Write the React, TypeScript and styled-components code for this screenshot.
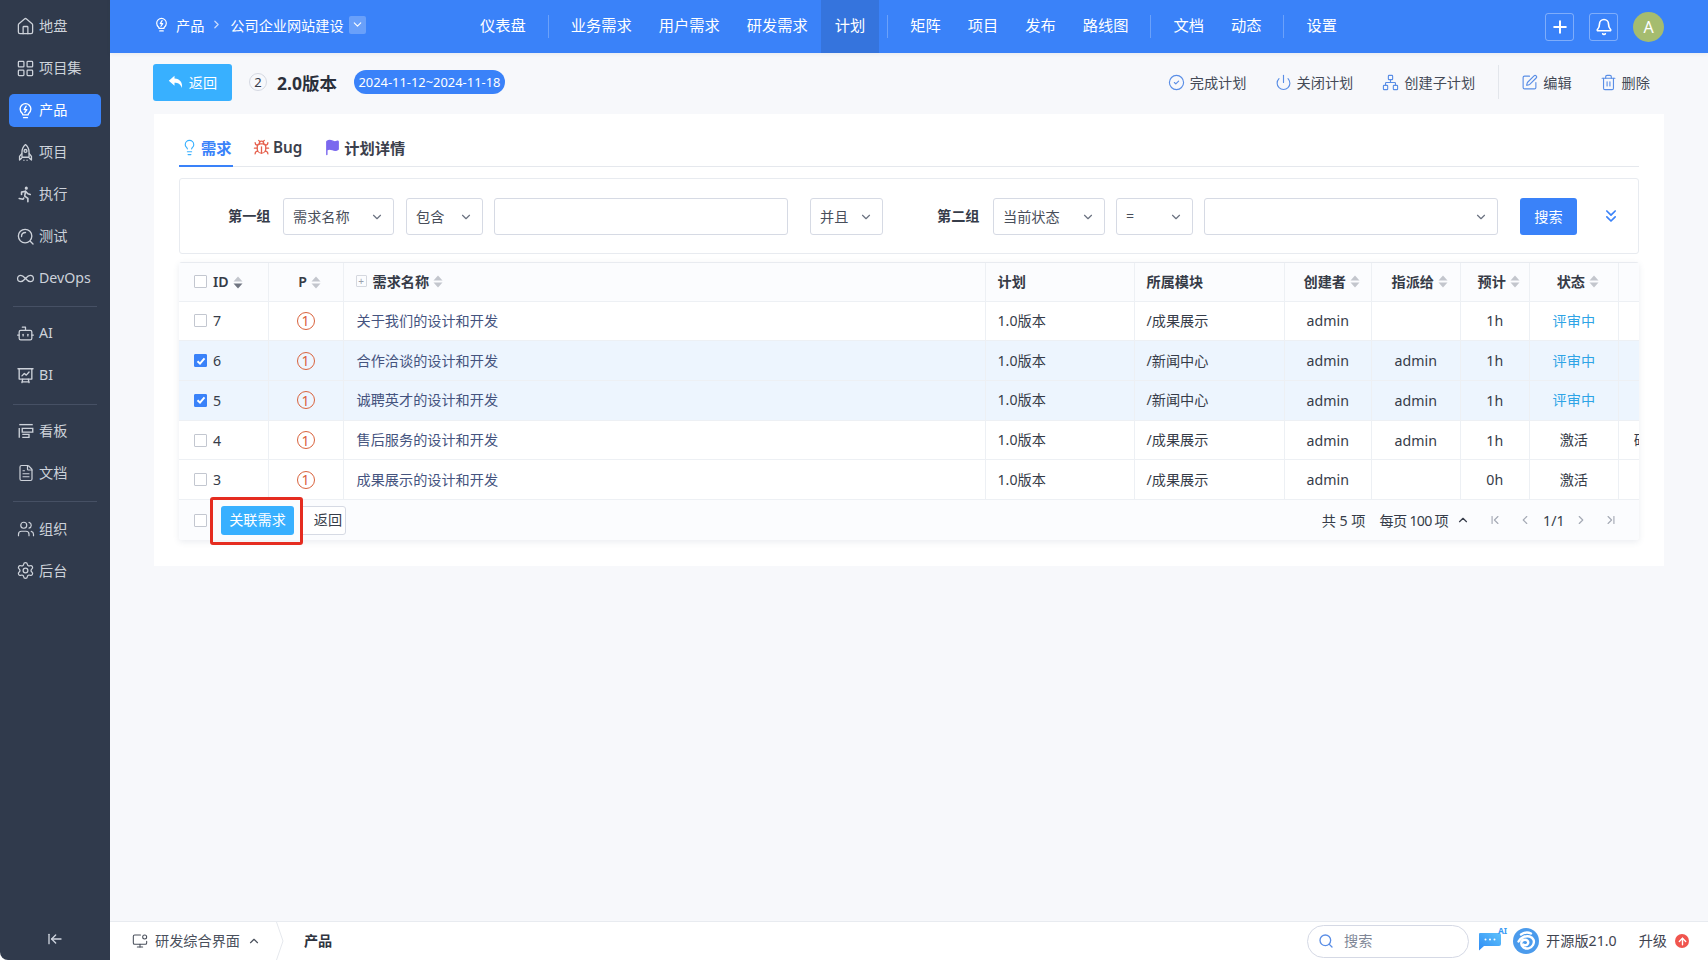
import React from "react";
import styled, { createGlobalStyle } from "styled-components";
import {
  ArrowLeftToLine,
  ArrowUp,
  Bell,
  Bot,
  Bug,
  ChevronDown,
  ChevronFirst,
  ChevronLast,
  ChevronLeft,
  ChevronRight,
  ChevronUp,
  ChevronsDown,
  CircleCheck,
  FileText,
  Flag,
  House,
  Infinity as InfinityIcon,
  LayoutGrid,
  Lightbulb,
  MonitorDot,
  Network,
  Plus,
  Power,
  Search,
  Settings,
  SquarePen,
  Trash2,
  Users,
} from "lucide-react";
import { TbRun } from "react-icons/tb";

const BLUE = "#3a82f9";
const TEXT = "#363c49";
const LINE = "#edf0f4";
const COLUMNS = "89.5px 75px 642px 149px 150px 87.5px 88.5px 69.5px 88.7px 60px";

const GlobalStyle = createGlobalStyle`
  html, body {
    margin: 0;
    padding: 0;
    background: #fff;
    overflow: hidden;
  }
  body {
    font-family: "Noto Sans", "Noto Sans CJK SC", sans-serif;
    font-size: 14.16px;
    color: ${TEXT};
  }
  * { box-sizing: border-box; }
`;

const Shell = styled.div`
  width: 1708px;
  height: 960px;
  display: flex;
  overflow: hidden;
  border-radius: 0 0 8px 8px;
`;

const Sidebar = styled.aside`
  width: 110px;
  flex: none;
  background: #303a4c;
  position: relative;
  padding-top: 9.5px;
`;

const SideItem = styled.div<{ $active?: boolean }>`
  height: 33px;
  margin: 0 9px 9px;
  padding: 0 0 2px 7px;
  display: flex;
  align-items: center;
  gap: 4px;
  border-radius: 5px;
  font-size: 14.16px;
  color: ${(p) => (p.$active ? "#fff" : "#cdd2da")};
  background: ${(p) => (p.$active ? BLUE : "transparent")};
`;

const SideIcon = styled.span`
  width: 19px;
  margin-top: 2px;
  flex: none;
  display: flex;
  justify-content: center;
`;

const SideDivider = styled.div`
  height: 1px;
  margin: 11.5px 13px 10px;
  background: #465064;
`;

const Collapse = styled.div`
  position: absolute;
  left: 47px;
  top: 931px;
  color: #cfd5df;
  display: flex;
`;

const Main = styled.div`
  flex: 1;
  min-width: 0;
  display: flex;
  flex-direction: column;
`;

const Topbar = styled.header`
  height: 53px;
  flex: none;
  display: flex;
  align-items: center;
  background: ${BLUE};
  color: #fff;
  position: relative;
  z-index: 2;
  box-shadow: 0 1px 4px rgba(40, 60, 90, 0.08);
`;

const Crumbs = styled.div`
  width: 356.4px;
  flex: none;
  padding: 0 0 4px 43px;
  display: flex;
  align-items: center;
  font-size: 14.16px;
`;

const CrumbText = styled.span`
  margin-left: 6px;
  white-space: nowrap;
`;

const CrumbArrow = styled.span`
  display: flex;
  margin: 0 1px 0 6px;
  color: #c6dafd;
`;

const CrumbToggle = styled.span`
  width: 17px;
  height: 18px;
  margin-left: 5px;
  border-radius: 2px;
  display: flex;
  align-items: center;
  justify-content: center;
  background: rgba(255, 255, 255, 0.24);
`;

const NavItem = styled.div<{ $active?: boolean }>`
  height: 53px;
  padding: 0 13.5px 6px;
  display: flex;
  align-items: center;
  font-size: 15.25px;
  white-space: nowrap;
  background: ${(p) => (p.$active ? "#3574dd" : "transparent")};
`;

const NavDivider = styled.div`
  width: 1px;
  height: 23px;
  margin: 0 8.5px;
  background: rgba(255, 255, 255, 0.25);
`;

const TopTools = styled.div`
  margin-left: auto;
  padding-right: 44px;
  display: flex;
  align-items: center;
`;

const ToolButton = styled.div`
  width: 29px;
  height: 28px;
  margin-right: 15px;
  border: 1px solid rgba(255, 255, 255, 0.35);
  border-radius: 3px;
  display: flex;
  align-items: center;
  justify-content: center;
`;

const Avatar = styled.div`
  width: 31px;
  height: 30px;
  border-radius: 50%;
  background: #a5bc6f;
  display: flex;
  align-items: center;
  justify-content: center;
  font-size: 16px;
`;

const Content = styled.main`
  flex: 1;
  min-height: 0;
  background: #f7f8fb;
`;

const PageHead = styled.div`
  height: 61px;
  padding: 0 0 3px 43px;
  display: flex;
  align-items: center;
`;

const BackButton = styled.div`
  width: 79px;
  height: 37px;
  border-radius: 3px;
  background: #38b0ff;
  color: #fff;
  display: flex;
  align-items: center;
  justify-content: center;
  gap: 5px;
`;

const PlanId = styled.span`
  width: 18px;
  height: 18px;
  margin-left: 17px;
  border: 1px solid #d5d9e2;
  border-radius: 50%;
  display: flex;
  align-items: center;
  justify-content: center;
  font-size: 13px;
`;

const PlanTitle = styled.h1`
  margin: 0 0 0 10px;
  font-size: 17.5px;
  font-weight: 700;
  color: #2b303b;
  white-space: nowrap;
`;

const DatePill = styled.span`
  width: 151px;
  height: 24px;
  margin-left: 17px;
  border-radius: 12px;
  background: ${BLUE};
  color: #fff;
  font-size: 12.9px;
  display: flex;
  align-items: center;
  justify-content: center;
  white-space: nowrap;
`;

const HeadActions = styled.div`
  margin-left: auto;
  padding-right: 58px;
  display: flex;
  align-items: center;
`;

const Action = styled.div<{ $gap: number }>`
  margin-left: ${(p) => p.$gap}px;
  display: flex;
  align-items: center;
  gap: 5px;
  font-size: 14.2px;
  white-space: nowrap;
  color: #444a56;
  svg { color: #5a8ee6; }
`;

const ActionDivider = styled.div`
  width: 1px;
  height: 34px;
  margin: 0 22px 0 23px;
  background: #e3e6eb;
`;

const Panel = styled.section`
  height: 452px;
  margin: 0 44.5px 0 44px;
  padding: 0 25px;
  background: #fff;
`;

const Tabs = styled.div`
  height: 53px;
  display: flex;
  align-items: center;
  padding-top: 14px;
  border-bottom: 1px solid #e5e8ed;
`;

const Tab = styled.div<{ $active?: boolean; $gap?: number }>`
  height: 39px;
  margin-left: ${(p) => p.$gap ?? 0}px;
  display: flex;
  align-items: center;
  gap: 3px;
  padding: 0 1px 0 2px;
  font-size: 15.25px;
  font-weight: 600;
  color: ${(p) => (p.$active ? BLUE : "#3b404c")};
  box-shadow: ${(p) => (p.$active ? `inset 0 -2px 0 ${BLUE}` : "none")};
`;

const SearchBox = styled.div`
  height: 76px;
  margin-top: 11px;
  border: 1px solid #e8ebf0;
  border-radius: 3px;
  display: flex;
  align-items: center;
  position: relative;
`;

const GroupLabel = styled.span<{ $left: number }>`
  position: absolute;
  left: ${(p) => p.$left}px;
  margin-top: -2px;
  font-weight: 600;
  white-space: nowrap;
`;

const Field = styled.div<{ $left: number; $width: number }>`
  position: absolute;
  left: ${(p) => p.$left}px;
  top: 19px;
  width: ${(p) => p.$width}px;
  height: 37px;
  padding: 0 9px 2px;
  border: 1px solid #d6dae4;
  border-radius: 3px;
  display: flex;
  align-items: center;
  justify-content: space-between;
  background: #fff;
  color: #484e5a;
  svg { color: #6b7280; flex: none; margin-top: 2px; }
`;

const SearchButton = styled.div`
  position: absolute;
  left: 1340px;
  top: 19px;
  width: 57px;
  height: 37px;
  padding-bottom: 2px;
  border-radius: 3px;
  background: ${BLUE};
  color: #fff;
  display: flex;
  align-items: center;
  justify-content: center;
`;

const MoreToggle = styled.div`
  position: absolute;
  left: 1421px;
  top: 27px;
  color: ${BLUE};
  display: flex;
`;

const Table = styled.div`
  margin-top: 8px;
  border-top: 1px solid #e8ebf0;
  border-radius: 3px;
  box-shadow: 0 2px 6px rgba(60, 80, 120, 0.1);
`;

const TableRow = styled.div<{ $checked?: boolean; $head?: boolean }>`
  display: grid;
  grid-template-columns: ${COLUMNS};
  height: ${(p) => (p.$head ? 38.6 : 39.7)}px;
  overflow: hidden;
  border-bottom: 1px solid ${LINE};
  background: ${(p) => (p.$head ? "#fbfcfe" : p.$checked ? "#edf5fe" : "#fff")};
`;

// Latin-only cells sit on the row centre, CJK glyphs need a nudge up
const Cell = styled.div<{ $center?: boolean; $pad?: number; $latin?: boolean }>`
  display: flex;
  align-items: center;
  gap: 6px;
  padding-left: ${(p) => p.$pad ?? 0}px;
  padding-bottom: ${(p) => (p.$latin ? 0 : 2)}px;
  justify-content: ${(p) => (p.$center ? "center" : "flex-start")};
  border-right: 1px solid ${LINE};
  white-space: nowrap;
  min-width: 0;
  &:last-child { border-right: 0; }
`;

const HeadCell = styled(Cell)`
  font-weight: 600;
  gap: 4px;
  padding-left: ${(p) => (p.$center ? 8 : p.$pad ?? 0)}px;
  color: #363b47;
`;

const IdLabel = styled.span`
  margin-left: 2px;
`;

const NameLink = styled.span`
  color: #45547f;
`;

const StatusText = styled.span<{ $review?: boolean }>`
  color: ${(p) => (p.$review ? "#2ea4e6" : TEXT)};
`;

const Clipped = styled.span`
  margin-left: 15px;
`;

const Box = styled.span<{ $checked?: boolean }>`
  width: 13px;
  height: 13px;
  flex: none;
  border: 1px solid ${(p) => (p.$checked ? BLUE : "#c3c7d0")};
  border-radius: 1px;
  background: ${(p) => (p.$checked ? BLUE : "#fff")};
  display: flex;
  align-items: center;
  justify-content: center;
`;

const Priority = styled.span`
  width: 18px;
  height: 18px;
  border: 1px solid #d9623c;
  border-radius: 50%;
  display: flex;
  align-items: center;
  justify-content: center;
  color: #d9623c;
  font-size: 14px;
`;

const ExpandBox = styled.span`
  width: 11px;
  height: 12px;
  margin-right: 2px;
  border: 1px solid #d5d8df;
  border-radius: 1px;
  display: flex;
  align-items: center;
  justify-content: center;
  color: #9aa0ac;
  font-size: 10px;
  font-weight: 400;
  line-height: 1;
`;

const Footer = styled.div`
  height: 40px;
  padding-left: 15px;
  display: flex;
  align-items: center;
  background: #fbfcfe;
  border-radius: 0 0 3px 3px;
`;

const LinkButton = styled.div`
  width: 73px;
  height: 29px;
  margin-left: 14px;
  padding-bottom: 2px;
  border-radius: 3px;
  background: #38b0ff;
  color: #fff;
  display: flex;
  align-items: center;
  justify-content: center;
  position: relative;
  z-index: 1;
  &::after {
    content: "";
    position: absolute;
    inset: -9px -9px -10px -11px;
    border: 3px solid #e52c20;
    border-radius: 3px;
  }
`;

const ReturnButton = styled.div`
  width: 46px;
  height: 29px;
  margin-left: 6px;
  padding: 0 0 2px 10px;
  border: 1px solid #d6dae4;
  border-radius: 3px;
  background: #fff;
  display: flex;
  align-items: center;
  justify-content: center;
`;

const Pager = styled.div`
  margin-left: auto;
  padding-right: 21px;
  display: flex;
  align-items: center;
  white-space: nowrap;
`;

const PagerText = styled.span<{ $gap: number; $tight?: boolean }>`
  margin-left: ${(p) => p.$gap}px;
  letter-spacing: ${(p) => (p.$tight ? "-0.7px" : "0")};
  display: flex;
  align-items: center;
`;

const PagerIcon = styled.span<{ $gap: number }>`
  margin-left: ${(p) => p.$gap}px;
  color: #a5aab5;
  display: flex;
`;

const BottomBar = styled.footer`
  height: 39px;
  flex: none;
  display: flex;
  align-items: center;
  background: #fff;
  border-top: 1px solid #e8ebf0;
  padding: 0 19px 0 22px;
`;

const AppSwitch = styled.div`
  padding-bottom: 2px;
  display: flex;
  align-items: center;
  gap: 7px;
  color: #4a505c;
  svg { margin-top: 2px; }
`;

const CrumbSplit = styled.svg`
  margin-left: 15px;
  flex: none;
`;

const CurrentApp = styled.span`
  margin: 0 0 2px 20px;
  font-weight: 700;
  color: #2f3440;
`;

const BottomRight = styled.div`
  margin-left: auto;
  display: flex;
  align-items: center;
`;

const GlobalSearch = styled.div`
  width: 162px;
  height: 33px;
  padding: 0 0 2px 10px;
  border: 1px solid #d5d9e5;
  border-radius: 17px;
  display: flex;
  align-items: center;
  gap: 10px;
  color: #808797;
  svg { color: #5a8ee6; margin-top: 2px; }
`;

const AiBadge = styled.div`
  width: 30px;
  height: 24px;
  margin: 0 6px 0 8px;
  position: relative;
`;

const AiLabel = styled.span`
  position: absolute;
  right: 0;
  top: -2px;
  color: #3a9cf5;
  font-size: 8.5px;
  font-weight: 700;
  line-height: 1;
`;

const EditionText = styled.span`
  margin: 0 0 2px 7px;
  color: #3f4450;
  white-space: nowrap;
`;

const UpgradeText = styled.span`
  margin: 0 0 2px 22px;
  color: #3f4450;
`;

const UpgradeDot = styled.span`
  width: 14px;
  height: 14px;
  margin-left: 8px;
  border-radius: 50%;
  background: #f0554e;
  color: #fff;
  display: flex;
  align-items: center;
  justify-content: center;
`;

const BulbBolt = ({ size = 19 }: { size?: number }) => (
  <svg width={size} height={size} viewBox="0 0 24 24" fill="none" stroke="currentColor" strokeWidth="1.7" strokeLinecap="round" strokeLinejoin="round">
    <path d="M8.5 16.5C6.6 15 5.2 13 5.2 10.2a6.8 6.8 0 0 1 13.6 0c0 2.8-1.4 4.8-3.3 6.3v1H8.5z" />
    <path d="M9.5 21h5" />
    <path d="M12.8 6.5 10.3 10.8h3.4l-2.5 3.7" />
  </svg>
);

const RocketGlyph = () => (
  <svg width="19" height="19" viewBox="0 0 24 24" fill="none" stroke="currentColor" strokeWidth="1.7" strokeLinejoin="round">
    <path d="M12 2c3 2.5 4.5 6 4.5 10v6h-9v-6C7.5 8 9 4.5 12 2z" />
    <circle cx="12" cy="10" r="1.8" />
    <path d="M7.5 13 4.5 17v4.5l3-2.5" />
    <path d="M16.5 13l3 4v4.5l-3-2.5" />
    <path d="M10 21v1.5M14 21v1.5" />
  </svg>
);

const ProbeGlyph = () => (
  <svg width="19" height="19" viewBox="0 0 24 24" fill="none" stroke="currentColor" strokeWidth="1.7" strokeLinecap="round">
    <circle cx="11.5" cy="11.5" r="8.5" />
    <path d="M18 18l3.5 3.5" />
    <path d="M7 12c0-3 2-5 5-5" />
  </svg>
);

const BoardGlyph = () => (
  <svg width="19" height="19" viewBox="0 0 24 24" fill="none" stroke="currentColor" strokeWidth="1.7" strokeLinecap="round" strokeLinejoin="round">
    <path d="M2.5 3.5h19" />
    <path d="M4 3.5v13h16v-13" />
    <path d="M7.5 12.5l3-3 2.5 2 3.5-4" />
    <path d="M8.5 16.5 7.5 21M15.5 16.5l1 4.5M7.5 20h9" />
  </svg>
);

const KanbanGlyph = () => (
  <svg width="18" height="18" viewBox="0 0 24 24" fill="none" stroke="currentColor" strokeWidth="1.8">
    <path d="M3 3.5h18" />
    <path d="M3 8v13" />
    <path d="M7 8.5h14v5H7z" />
    <path d="M7 20.5h9v-4H7" />
  </svg>
);

const SortSvg = styled.svg`
  flex: none;
  margin-top: 2px;
`;

const SortIcon = ({ active }: { active?: boolean }) => (
  <SortSvg width="10" height="13" viewBox="0 0 10 13">
    <path d="M5 0.5 9.5 5.5H0.5z" fill="#c3c6cd" />
    <path d="M5 12.5 0.5 7.5H9.5z" fill={active ? "#6f7480" : "#c3c6cd"} />
  </SortSvg>
);

const CheckMark = () => (
  <svg width="10" height="10" viewBox="0 0 10 10" fill="none" stroke="#fff" strokeWidth="2">
    <path d="M1.5 5.2 4 7.6 8.5 2.4" />
  </svg>
);

const ReplyGlyph = () => (
  <svg width="16" height="14" viewBox="0 0 16 14" fill="#fff">
    <path d="M6.5 0.8 0.8 5.8l5.7 5V7.7c3.5 0 5.8 1 7.5 5.3.5-5.7-2-9-7.5-9.4z" />
  </svg>
);

const ChatGlyph = () => (
  <svg width="25" height="22" viewBox="0 0 25 22">
    <defs>
      <linearGradient id="chatFill" x1="0" y1="1" x2="1" y2="0">
        <stop offset="0" stopColor="#2f8cf5" />
        <stop offset="1" stopColor="#5fc2fb" />
      </linearGradient>
    </defs>
    <path d="M3 4h19a2 2 0 0 1 2 2v9a2 2 0 0 1-2 2H7l-5 4.5V5a1 1 0 0 1 1-1z" fill="url(#chatFill)" />
    <circle cx="8.5" cy="10.5" r="1" fill="#fff" />
    <circle cx="13" cy="10.5" r="1" fill="#fff" />
    <circle cx="17.5" cy="10.5" r="1" fill="#fff" />
  </svg>
);

const LogoSvg = styled.svg`
  flex: none;
`;

const ZentaoLogo = () => (
  <LogoSvg width="26" height="26" viewBox="0 0 26 26" fill="none" stroke="#fff" strokeWidth="2.4" strokeLinecap="round">
    <circle cx="13" cy="13" r="13" fill="#4b9bec" stroke="none" />
    <path d="M8 6.5c3-2 7-2.5 10-1" />
    <path d="M5.5 13.5c2-4 7-6 11-5 4 1 5.5 5 3.5 8.5s-6.5 4.5-9.5 2.5-3-6.5 0-7.5 5.5 1 4.5 3.5-3.5 2-4.5 1" />
  </LogoSvg>
);

const sideGroups: { icon: React.ReactNode; label: string; active?: boolean }[][] = [
  [
    { icon: <House size={19} strokeWidth={1.6} />, label: "地盘" },
    { icon: <LayoutGrid size={19} strokeWidth={1.6} />, label: "项目集" },
    { icon: <BulbBolt />, label: "产品", active: true },
    { icon: <RocketGlyph />, label: "项目" },
    { icon: <TbRun size={19} />, label: "执行" },
    { icon: <ProbeGlyph />, label: "测试" },
    { icon: <InfinityIcon size={19} strokeWidth={1.6} />, label: "DevOps" },
  ],
  [
    { icon: <Bot size={19} strokeWidth={1.6} />, label: "AI" },
    { icon: <BoardGlyph />, label: "BI" },
  ],
  [
    { icon: <KanbanGlyph />, label: "看板" },
    { icon: <FileText size={18} strokeWidth={1.6} />, label: "文档" },
  ],
  [
    { icon: <Users size={18} strokeWidth={1.6} />, label: "组织" },
    { icon: <Settings size={19} strokeWidth={1.6} />, label: "后台" },
  ],
];

const navItems = [
  "仪表盘", "|", "业务需求", "用户需求", "研发需求", "计划", "|",
  "矩阵", "项目", "发布", "路线图", "|", "文档", "动态", "|", "设置",
];

const stories = [
  { id: 7, name: "关于我们的设计和开发", module: "/成果展示", assigned: "", est: "1h", status: "评审中", checked: false, extra: "" },
  { id: 6, name: "合作洽谈的设计和开发", module: "/新闻中心", assigned: "admin", est: "1h", status: "评审中", checked: true, extra: "" },
  { id: 5, name: "诚聘英才的设计和开发", module: "/新闻中心", assigned: "admin", est: "1h", status: "评审中", checked: true, extra: "" },
  { id: 4, name: "售后服务的设计和开发", module: "/成果展示", assigned: "admin", est: "1h", status: "激活", checked: false, extra: "研发" },
  { id: 3, name: "成果展示的设计和开发", module: "/成果展示", assigned: "", est: "0h", status: "激活", checked: false, extra: "" },
];

export default function App() {
  return (
    <Shell>
      <GlobalStyle />
      <Sidebar>
        {sideGroups.map((group, i) => (
          <React.Fragment key={i}>
            {i > 0 && <SideDivider />}
            {group.map((item) => (
              <SideItem key={item.label} $active={item.active}>
                <SideIcon>{item.icon}</SideIcon>
                {item.label}
              </SideItem>
            ))}
          </React.Fragment>
        ))}
        <Collapse>
          <ArrowLeftToLine size={16} strokeWidth={2} />
        </Collapse>
      </Sidebar>

      <Main>
        <Topbar>
          <Crumbs>
            <BulbBolt size={17} />
            <CrumbText>产品</CrumbText>
            <CrumbArrow>
              <ChevronRight size={13} strokeWidth={2.4} />
            </CrumbArrow>
            <CrumbText>公司企业网站建设</CrumbText>
            <CrumbToggle>
              <ChevronDown size={13} />
            </CrumbToggle>
          </Crumbs>
          {navItems.map((item, i) =>
            item === "|" ? (
              <NavDivider key={i} />
            ) : (
              <NavItem key={i} $active={item === "计划"}>
                {item}
              </NavItem>
            )
          )}
          <TopTools>
            <ToolButton>
              <Plus size={20} strokeWidth={2.4} />
            </ToolButton>
            <ToolButton>
              <Bell size={18} strokeWidth={2.2} />
            </ToolButton>
            <Avatar>A</Avatar>
          </TopTools>
        </Topbar>

        <Content>
          <PageHead>
            <BackButton>
              <ReplyGlyph />
              返回
            </BackButton>
            <PlanId>2</PlanId>
            <PlanTitle>2.0版本</PlanTitle>
            <DatePill>2024-11-12~2024-11-18</DatePill>
            <HeadActions>
              <Action $gap={0}>
                <CircleCheck size={17} strokeWidth={1.6} />
                完成计划
              </Action>
              <Action $gap={28}>
                <Power size={17} strokeWidth={1.6} />
                关闭计划
              </Action>
              <Action $gap={29}>
                <Network size={17} strokeWidth={1.6} />
                创建子计划
              </Action>
              <ActionDivider />
              <Action $gap={0}>
                <SquarePen size={17} strokeWidth={1.6} />
                编辑
              </Action>
              <Action $gap={28}>
                <Trash2 size={17} strokeWidth={1.6} />
                删除
              </Action>
            </HeadActions>
          </PageHead>

          <Panel>
            <Tabs>
              <Tab $active>
                <Lightbulb size={17} strokeWidth={1.6} color="#38b0ff" />
                需求
              </Tab>
              <Tab $gap={18.5}>
                <Bug size={17} strokeWidth={1.8} color="#e5604d" />
                Bug
              </Tab>
              <Tab $gap={19}>
                <Flag size={17} color="#7b68ee" fill="#7b68ee" />
                计划详情
              </Tab>
            </Tabs>

            <SearchBox>
              <GroupLabel $left={48}>第一组</GroupLabel>
              <Field $left={103} $width={111}>
                需求名称 <ChevronDown size={14} />
              </Field>
              <Field $left={226} $width={77}>
                包含 <ChevronDown size={14} />
              </Field>
              <Field $left={314} $width={294} />
              <Field $left={630} $width={73}>
                并且 <ChevronDown size={14} />
              </Field>
              <GroupLabel $left={757}>第二组</GroupLabel>
              <Field $left={813} $width={112}>
                当前状态 <ChevronDown size={14} />
              </Field>
              <Field $left={936} $width={77}>
                = <ChevronDown size={14} />
              </Field>
              <Field $left={1024} $width={294}>
                <span />
                <ChevronDown size={14} />
              </Field>
              <SearchButton>搜索</SearchButton>
              <MoreToggle>
                <ChevronsDown size={20} />
              </MoreToggle>
            </SearchBox>

            <Table>
              <TableRow $head>
                <HeadCell $pad={15} $latin>
                  <Box />
                  <IdLabel>ID</IdLabel>
                  <SortIcon active />
                </HeadCell>
                <HeadCell $center $latin>
                  P
                  <SortIcon />
                </HeadCell>
                <HeadCell $pad={12}>
                  <ExpandBox>+</ExpandBox>
                  需求名称
                  <SortIcon />
                </HeadCell>
                <HeadCell $pad={12}>计划</HeadCell>
                <HeadCell $pad={12}>所属模块</HeadCell>
                <HeadCell $center>
                  创建者
                  <SortIcon />
                </HeadCell>
                <HeadCell $center>
                  指派给
                  <SortIcon />
                </HeadCell>
                <HeadCell $center>
                  预计
                  <SortIcon />
                </HeadCell>
                <HeadCell $center>
                  状态
                  <SortIcon />
                </HeadCell>
                <HeadCell />
              </TableRow>
              {stories.map((s) => (
                <TableRow key={s.id} $checked={s.checked}>
                  <Cell $pad={15} $latin>
                    <Box $checked={s.checked}>{s.checked && <CheckMark />}</Box>
                    {s.id}
                  </Cell>
                  <Cell $center $latin>
                    <Priority>1</Priority>
                  </Cell>
                  <Cell $pad={13}>
                    <NameLink>{s.name}</NameLink>
                  </Cell>
                  <Cell $pad={12}>1.0版本</Cell>
                  <Cell $pad={12}>{s.module}</Cell>
                  <Cell $center $latin>admin</Cell>
                  <Cell $center $latin>{s.assigned}</Cell>
                  <Cell $center $latin>{s.est}</Cell>
                  <Cell $center>
                    <StatusText $review={s.status === "评审中"}>{s.status}</StatusText>
                  </Cell>
                  <Cell>{s.extra && <Clipped>{s.extra}</Clipped>}</Cell>
                </TableRow>
              ))}
              <Footer>
                <Box />
                <LinkButton>关联需求</LinkButton>
                <ReturnButton>返回</ReturnButton>
                <Pager>
                  <PagerText $gap={0}>共 5 项</PagerText>
                  <PagerText $gap={14} $tight>每页 100 项</PagerText>
                  <PagerText $gap={8}>
                    <ChevronUp size={14} />
                  </PagerText>
                  <PagerIcon $gap={18}>
                    <ChevronFirst size={14} />
                  </PagerIcon>
                  <PagerIcon $gap={16}>
                    <ChevronLeft size={14} />
                  </PagerIcon>
                  <PagerText $gap={11}>1/1</PagerText>
                  <PagerIcon $gap={9}>
                    <ChevronRight size={14} />
                  </PagerIcon>
                  <PagerIcon $gap={16}>
                    <ChevronLast size={14} />
                  </PagerIcon>
                </Pager>
              </Footer>
            </Table>
          </Panel>
        </Content>

        <BottomBar>
          <AppSwitch>
            <MonitorDot size={16} strokeWidth={1.6} />
            研发综合界面
            <ChevronUp size={14} />
          </AppSwitch>
          <CrumbSplit width="8" height="38" viewBox="0 0 8 38" fill="none" stroke="#e5e8ed">
            <path d="M0.5 0 7 19 0.5 38" />
          </CrumbSplit>
          <CurrentApp>产品</CurrentApp>
          <BottomRight>
            <GlobalSearch>
              <Search size={16} />
              搜索
            </GlobalSearch>
            <AiBadge>
              <ChatGlyph />
              <AiLabel>AI</AiLabel>
            </AiBadge>
            <ZentaoLogo />
            <EditionText>开源版21.0</EditionText>
            <UpgradeText>升级</UpgradeText>
            <UpgradeDot>
              <ArrowUp size={11} strokeWidth={3} />
            </UpgradeDot>
          </BottomRight>
        </BottomBar>
      </Main>
    </Shell>
  );
}
